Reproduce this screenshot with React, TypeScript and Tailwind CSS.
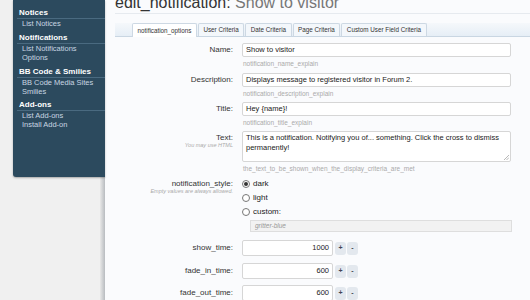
import React from "react";

const font = { fontFamily: '"Liberation Sans", Arial, sans-serif' };

function SideHead({ children }: { children: React.ReactNode }) {
  return (
    <div className="ml-[4px] border-b border-[#4a6a80] pl-[2px] text-[8px] font-bold leading-[10px] text-white">
      {children}
    </div>
  );
}
function SideItem({ children }: { children: React.ReactNode }) {
  return <div className="pl-[9px] text-[7.5px] leading-[9px] text-[#c8d6e2]">{children}</div>;
}

function Row({
  label,
  hint,
  children,
  mt,
}: {
  label: string;
  hint?: string;
  children: React.ReactNode;
  mt: string;
}) {
  return (
    <div className={`flex ${mt}`}>
      <div className="w-[118px] shrink-0 text-right">
        <div className="text-[8px] leading-[14px] text-[#333]">{label}</div>
        {hint && <div className="-mt-[3px] text-[5.5px] italic leading-[7px] text-[#aaa]">{hint}</div>}
      </div>
      <div className="ml-[9px] w-[269px]">{children}</div>
    </div>
  );
}

function Explain({ children }: { children: React.ReactNode }) {
  return <div className="mt-[2px] pl-[1px] text-[6.5px] leading-[9px] text-[#aaa]">{children}</div>;
}

function TextBox({ value }: { value: string }) {
  return (
    <div className="flex h-[14px] items-center rounded-[2px] border border-[#d6d6d6] bg-white px-[3px] text-[7.5px] text-[#222]">
      {value}
    </div>
  );
}

function Radio({ checked, label }: { checked?: boolean; label: string }) {
  return (
    <div className="flex h-[14px] items-center">
      <div className="flex h-[8px] w-[8px] items-center justify-center rounded-full border border-[#777] bg-white">
        {checked && <div className="h-[4px] w-[4px] rounded-full bg-[#333]" />}
      </div>
      <span className="ml-[3px] text-[8px] text-[#222]">{label}</span>
    </div>
  );
}

function NumRow({ label, value, mt }: { label: string; value: string; mt: string }) {
  return (
    <div className={`flex items-center ${mt}`}>
      <div className="w-[118px] shrink-0 text-right text-[8px] leading-[16px] text-[#333]">{label}</div>
      <div className="ml-[9px] flex items-center">
        <div className="flex h-[16px] w-[91px] items-center justify-end rounded-[2px] border border-[#d6d6d6] bg-white pr-[3px] text-[7.5px] text-[#222]">
          {value}
        </div>
        <div className="ml-[2px] flex h-[13px] w-[11px] items-center justify-center rounded-[3px] bg-[#e3e8ee] text-[7px] font-bold text-[#445]">
          +
        </div>
        <div className="ml-[1px] flex h-[13px] w-[11px] items-center justify-center rounded-[3px] bg-[#e3e8ee] text-[7px] font-bold text-[#445]">
          -
        </div>
      </div>
    </div>
  );
}

export default function App() {
  const tabs = ["notification_options", "User Criteria", "Date Criteria", "Page Criteria", "Custom User Field Criteria"];
  return (
    <div className="flex h-[300px] w-[530px] overflow-hidden bg-[#f0f0f0]" style={font}>
      {/* left column */}
      <div className="relative w-[105px] shrink-0">
        <div className="absolute right-0 top-0 h-full w-[5px] bg-gradient-to-r from-[#e8e8e8] to-[#b8bcc0]" />
        <div className="relative ml-[13px] h-[177px] w-[92px] rounded-bl-[3px] bg-[#2c4a5e] pt-[8px] shadow-[0_1px_2px_rgba(0,0,0,0.3)]">
          <SideHead>Notices</SideHead>
          <SideItem>List Notices</SideItem>
          <div className="mt-[5px]">
            <SideHead>Notifications</SideHead>
          </div>
          <SideItem>List Notifications</SideItem>
          <SideItem>Options</SideItem>
          <div className="mt-[5px]">
            <SideHead>BB Code &amp; Smilies</SideHead>
          </div>
          <SideItem>BB Code Media Sites</SideItem>
          <SideItem>Smilies</SideItem>
          <div className="mt-[4px]">
            <SideHead>Add-ons</SideHead>
          </div>
          <SideItem>List Add-ons</SideItem>
          <SideItem>Install Add-on</SideItem>
        </div>
      </div>

      {/* main */}
      <div className="w-[425px] shrink-0 bg-[#fafbfd] pl-[10px]">
        <div className="-mt-[6px] border-b border-[#e6eaef] pb-[1px] text-[16px] leading-[18px]">
          <span className="text-[#333]">edit_notification:</span>{" "}
          <span className="text-[#777]">Show to visitor</span>
        </div>

        <div className="mt-[9px] flex h-[14px] items-end border-b border-[#c9d6e2] bg-gradient-to-b from-[#f5f8fb] to-[#e6eef6] pl-[17px]">
          {tabs.map((t, i) => (
            <div
              key={t}
              className={`mr-[1px] flex h-[13px] items-center rounded-t-[2px] border border-b-0 border-[#cdd8e3] px-[4.5px] text-[6.3px] text-[#333] ${
                i === 0 ? "-mb-px h-[14px] bg-white" : "bg-[#f3f7fb]"
              }`}
            >
              {t}
            </div>
          ))}
        </div>

        <div className="mt-[6px]">
          <Row label="Name:" mt="mt-0">
            <TextBox value="Show to visitor" />
            <Explain>notification_name_explain</Explain>
          </Row>
          <Row label="Description:" mt="mt-[5px]">
            <TextBox value="Displays message to registered visitor in Forum 2." />
            <Explain>notification_description_explain</Explain>
          </Row>
          <Row label="Title:" mt="mt-[4px]">
            <TextBox value="Hey {name}!" />
            <Explain>notification_title_explain</Explain>
          </Row>
          <Row label="Text:" hint="You may use HTML" mt="mt-[4px]">
            <div className="relative h-[31px] rounded-[2px] border border-[#d6d6d6] bg-white px-[3px] pt-[1px] text-[7.5px] leading-[10px] text-[#222]">
              This is a notification. Notifying you of... something. Click the cross to dismiss permanently!
              <svg className="absolute bottom-[1px] right-[1px]" width="5" height="5" viewBox="0 0 5 5">
                <path d="M0 5 L5 0 M2.5 5 L5 2.5" stroke="#999" strokeWidth="0.7" />
              </svg>
            </div>
            <Explain>the_text_to_be_shown_when_the_display_criteria_are_met</Explain>
          </Row>
          <Row label="notification_style:" hint="Empty values are always allowed." mt="mt-[4px]">
            <Radio checked label="dark" />
            <Radio label="light" />
            <Radio label="custom:" />
            <div className="ml-[8px] mt-[1px] flex h-[12px] w-[262px] items-center border border-[#dedede] bg-[#f2f2f2] px-[4px] text-[6.5px] italic text-[#999]">
              gritter-blue
            </div>
          </Row>
          <NumRow label="show_time:" value="1000" mt="mt-[8px]" />
          <NumRow label="fade_in_time:" value="600" mt="mt-[7px]" />
          <NumRow label="fade_out_time:" value="600" mt="mt-[6px]" />
        </div>
      </div>
    </div>
  );
}
